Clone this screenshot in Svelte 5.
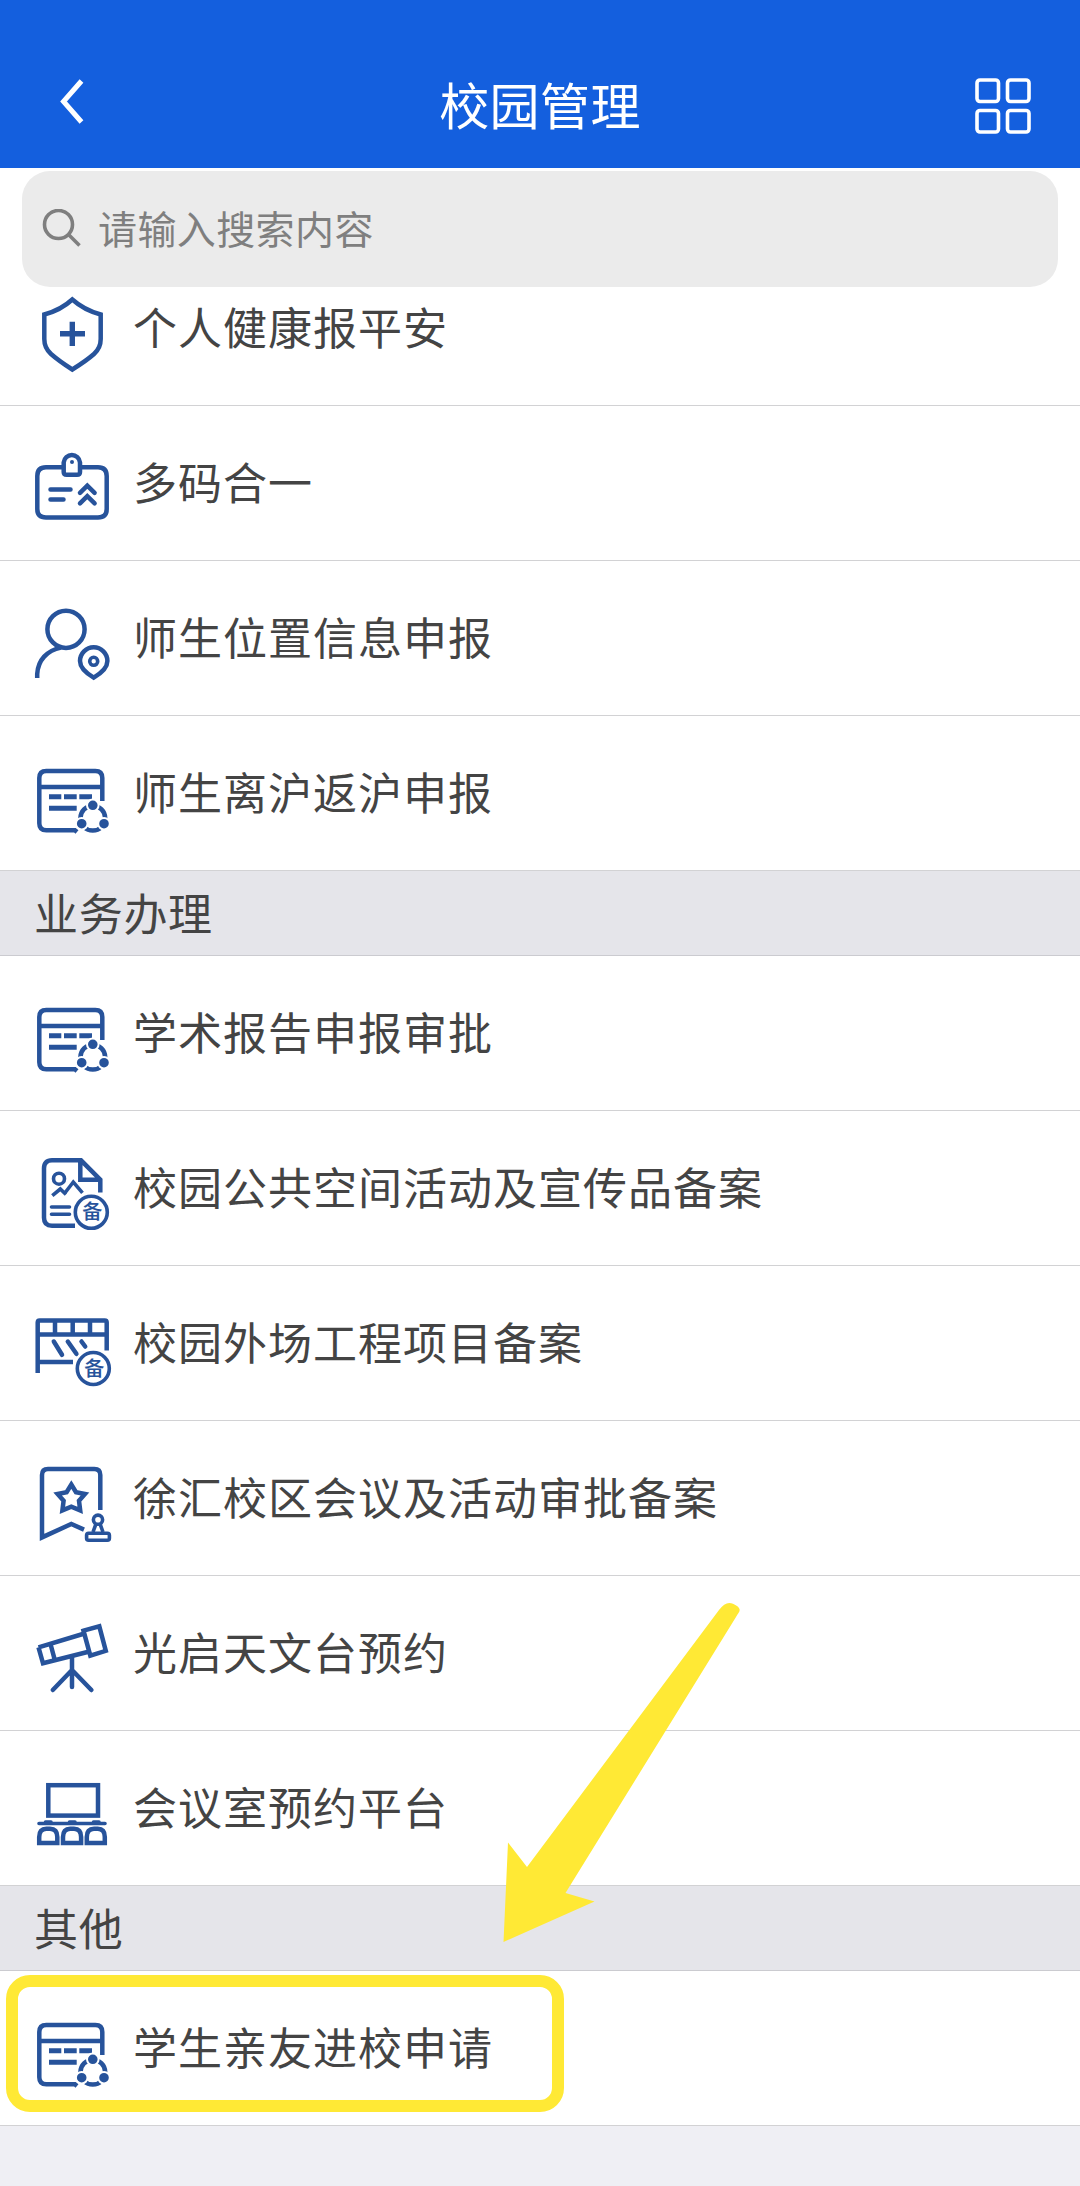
<script lang="ts">
    interface Item {
        icon: string;
        label: string;
    }

    interface Section {
        title?: string;
        items: Item[];
    }

    const sections: Section[] = [
        {
            items: [
                { icon: "shield", label: "个人健康报平安" },
                { icon: "badge", label: "多码合一" },
                { icon: "person", label: "师生位置信息申报" },
                { icon: "form", label: "师生离沪返沪申报" },
            ],
        },
        {
            title: "业务办理",
            items: [
                { icon: "form", label: "学术报告申报审批" },
                { icon: "poster", label: "校园公共空间活动及宣传品备案" },
                { icon: "fence", label: "校园外场工程项目备案" },
                { icon: "banner", label: "徐汇校区会议及活动审批备案" },
                { icon: "telescope", label: "光启天文台预约" },
                { icon: "room", label: "会议室预约平台" },
            ],
        },
        {
            title: "其他",
            items: [{ icon: "form", label: "学生亲友进校申请" }],
        },
    ];

    let query = $state("");
</script>

{#snippet itemIcon(name: string)}
    <svg class="icon" viewBox="0 0 80 80" aria-hidden="true">
        {#if name === "shield"}
            <path d="M40.3 7.5Q52 18 68.7 22.5V47Q68.7 56 62 62Q54 69 40.3 77.5Q27 69 19 62Q12.3 56 12.3 47V22.5Q29 18 40.3 7.5Z" />
            <path stroke-width="5.4" d="M28 41.7H53M40.3 29.7V54" />
        {:else if name === "badge"}
            <path d="M31.7 20.2H14Q5.3 20.2 5.3 29V62Q5.3 70.5 14 70.5H66Q74.7 70.5 74.7 62V29Q74.7 20.2 66 20.2H48" />
            <path d="M31.7 15.4A8.2 8.2 0 0 1 48 15.4V25Q48 27.8 45 27.8H34.7Q31.7 27.8 31.7 25Z" />
            <circle class="solid" cx="40" cy="15" r="2" />
            <path class="round" d="M18.5 42.5H38.5M18.5 52.5H31.5M48 45.8L55.3 38.6L62.6 45.8M48 56.4L55.3 49.2L62.6 56.4" />
        {:else if name === "person"}
            <circle cx="34" cy="27.3" r="18.6" />
            <path d="M5.2 76V72C6 58 15 48.5 29 45.6" />
            <path d="M61.7 75.6Q48 67.5 48 59A13.7 13.7 0 0 1 75.4 59Q75.4 67.5 61.7 75.6Z" />
            <circle cx="61.7" cy="59.3" r="4" stroke-width="3.6" />
        {:else if name === "form"}
            <path d="M70.3 44V21Q70.3 14 63.3 14H14.3Q7.3 14 7.3 21V66.3Q7.3 73.3 14.3 73.3H43L45 75M7.3 30H70.3" />
            <path class="dashes" d="M17 39.7H29.3M32 39.7H44.7M47.3 39.7H60M17 51.3H44.7" />
            <circle cx="60.8" cy="61.2" r="12.4" />
            <g class="node">
                <circle cx="60.8" cy="48.3" r="5.8" />
                <circle cx="49.7" cy="66.7" r="5.8" />
                <circle cx="72" cy="66.7" r="5.8" />
            </g>
        {:else if name === "poster"}
            <path d="M43 74.7H20Q12 74.7 12 66.7V17.3Q12 9.3 20 9.3H49L68.3 28.7V41.5M48.3 9.3V28.7H68.3" />
            <circle class="thin" cx="27" cy="27.7" r="5.5" />
            <path class="thin" d="M20.3 44.7L28.3 38L34 43.5M32.5 42.5L41.3 31L50.5 41.8" />
            <path class="thin round" d="M19.5 56H37.5M19.5 63.3H37.5" />
            <circle class="thin" cx="59.3" cy="61.3" r="16" />
            <text x="60.3" y="68.4">备</text>
        {:else if name === "fence"}
            <path d="M5.7 66V15.5Q5.7 13.5 7.7 13.5H72.7Q74.7 13.5 74.7 15.5V43.5M5.7 27.5H74.7M23 13.5V27.5M40.7 13.5V27.5M58 13.5V27.5M5.7 55H41" />
            <path class="round" d="M21.8 34.5L30 47.8M35.8 34.5L44.4 46.8M49.5 34.5L53.2 39.5" />
            <circle class="thin" cx="61.3" cy="61.5" r="16" />
            <text x="62.3" y="68.6">备</text>
        {:else if name === "banner"}
            <path d="M68.3 48V13Q68.3 7 62.3 7H16Q10 7 10 13V75.4L39.3 62L52 67.6" />
            <path d="M39.3 22.5L44 30.2L53 32L47 38.8L48.2 48.4L39.3 44.6L30.4 48.4L31.6 38.8L25.6 32L34.6 30.2Z" />
            <circle class="thin" cx="66" cy="57.7" r="4.6" />
            <path class="thin" d="M64 61.8L61 70M68 61.8L71 70" />
            <rect class="thin" x="54.6" y="71.3" width="22.8" height="7" rx="2" />
        {:else if name === "telescope"}
            <path d="M6.5 30.3L52.5 16.5M57.5 34.5L11 46.3L6.5 30.3M18.5 27L22.7 42.7" />
            <path d="M51.5 13.7L67.3 9.3L73.8 33.8L58.3 38.6Z" />
            <path class="round" d="M40 40.3V70M40 53L20.8 73M40 53L59.4 73" />
        {:else if name === "room"}
            <rect x="16.3" y="13.2" width="49.7" height="30.4" />
            <path class="thin round" d="M7 51.5H73M13.5 50H19M37.5 50H43M61.5 50H67" />
            <path d="M7.2 71V65Q7.2 56.7 14.4 56.7H18Q25.3 56.7 25.3 65V71ZM31 71V65Q31 56.7 38.2 56.7H42Q49.1 56.7 49.1 65V71ZM54.8 71V65Q54.8 56.7 62 56.7H65.8Q72.8 56.7 72.8 65V71Z" />
        {/if}
    </svg>
{/snippet}

<div class="page">
    <header>
        <button class="nav-btn" aria-label="返回">
            <svg width="24" height="48" viewBox="0 0 24 48">
                <path d="M21.5 4L3.5 24.5L21.5 45" />
            </svg>
        </button>
        <h1>校园管理</h1>
        <button class="nav-btn" aria-label="菜单">
            <svg width="56" height="56" viewBox="0 0 56 56">
                <rect x="2" y="2" width="21.5" height="21.5" rx="3" />
                <rect x="32.5" y="2" width="21.5" height="21.5" rx="3" />
                <rect x="2" y="32.5" width="21.5" height="21.5" rx="3" />
                <rect x="32.5" y="32.5" width="21.5" height="21.5" rx="3" />
            </svg>
        </button>
    </header>

    <label class="search">
        <svg width="40" height="40" viewBox="0 0 40 40">
            <circle cx="16.5" cy="15.5" r="14" />
            <path d="M26.5 25.5L37.5 36.5" />
        </svg>
        <input type="text" bind:value={query} placeholder="请输入搜索内容" />
    </label>

    <main>
        {#each sections as section}
            {#if section.title}
                <h2>{section.title}</h2>
            {/if}
            <ul>
                {#each section.items as item}
                    <li>
                        {@render itemIcon(item.icon)}
                        <span>{item.label}</span>
                    </li>
                {/each}
            </ul>
        {/each}
    </main>

    <!-- hand-drawn hint over the last entry -->
    <div class="highlight"></div>
    <svg class="arrow" width="240" height="344" viewBox="0 0 240 344">
        <path d="M3.5 344L8 244.5L27 269L219 12C225 4 230 3 237 8C242 12 239 14 236 19L65.5 295L94.5 303.5Z" />
    </svg>
</div>

<style>
    :global(body) {
        margin: 0;
        background: #efeff4;
    }

    .page {
        position: relative;
        width: 1080px;
        height: 2186px;
        overflow: hidden;
        background: #efeff4;
        color: #444;
        font-family: "Noto Sans CJK SC", sans-serif;
    }

    svg {
        fill: none;
        stroke: currentColor;
    }

    header {
        box-sizing: border-box;
        height: 168px;
        padding: 44px 49px 0 60px;
        display: grid;
        grid-template-columns: 80px 1fr 91px;
        align-items: center;
        background: #145fde;
        color: #fff;
    }

    .nav-btn {
        display: flex;
        padding: 0;
        border: 0;
        background: none;
        color: inherit;
        stroke-width: 5px;
    }

    .nav-btn:first-child {
        margin-top: -10px;
    }

    .nav-btn:last-child {
        justify-content: flex-end;
        stroke-width: 3.6px;
    }

    h1 {
        margin: -6px 0 0;
        font-size: 50px;
        font-weight: 400;
        line-height: 70px;
        letter-spacing: 0.4px;
        text-align: center;
    }

    .search {
        position: relative;
        z-index: 1;
        box-sizing: border-box;
        height: 116px;
        margin: 3px 22px -36px;
        padding-left: 20px;
        display: flex;
        align-items: center;
        gap: 16px;
        border-radius: 28px;
        color: #7f7f7f;
        stroke-width: 3.6px;
    }

    .search input {
        flex: 1;
        padding: 0 0 5px;
        border: 0;
        outline: 0;
        background: none;
        color: #444;
        font: 39px "Noto Sans CJK SC", sans-serif;
        letter-spacing: 0.4px;
    }

    .search input::placeholder {
        color: #7f7f7f;
        opacity: 1;
    }

    main {
        background: #fff;
    }

    /* the search box overlaps the list, keep the strip above it white */
    .search::before {
        content: "";
        position: absolute;
        z-index: -1;
        inset: -3px -22px 30px;
        background: #fff;
    }

    .search::after {
        content: "";
        position: absolute;
        z-index: -1;
        inset: 0;
        border-radius: 28px;
        background: #ebebeb;
    }

    ul {
        margin: 0;
        padding: 0;
        list-style: none;
    }

    li {
        box-sizing: border-box;
        height: 155.1px;
        padding: 7px 32px 0;
        display: flex;
        align-items: center;
        gap: 21px;
        border-bottom: 1px solid #d2d2d4;
        font-size: 44px;
        letter-spacing: 1px;
    }

    li span {
        margin-top: -11px;
        line-height: 64px;
        white-space: nowrap;
    }

    h2 {
        box-sizing: border-box;
        height: 84.4px;
        margin: 0;
        padding-left: 34px;
        border-bottom: 1px solid #cbcbd0;
        background: #e5e5ea;
        font-size: 44px;
        font-weight: 400;
        line-height: 82px;
        letter-spacing: 0.7px;
    }

    .icon {
        flex: none;
        width: 80px;
        height: 80px;
        overflow: visible;
        color: #27539b;
        stroke-width: 4.5px;
    }

    .icon .solid {
        fill: currentColor;
        stroke: none;
    }

    .icon .round {
        stroke-linecap: round;
    }

    .icon .thin {
        stroke-width: 3.6px;
    }

    .icon .dashes {
        stroke-width: 5px;
    }

    .icon .node {
        fill: currentColor;
        stroke: #fff;
        stroke-width: 2px;
    }

    .icon text {
        fill: currentColor;
        stroke: none;
        font-size: 20px;
        font-weight: 500;
        letter-spacing: 0;
        text-anchor: middle;
    }

    .highlight {
        position: absolute;
        left: 6px;
        top: 1975px;
        box-sizing: border-box;
        width: 558px;
        height: 137px;
        border: 12px solid #ffe935;
        border-radius: 24px;
    }

    .arrow {
        position: absolute;
        left: 500px;
        top: 1598px;
        fill: #ffe935;
        stroke: none;
    }
</style>
